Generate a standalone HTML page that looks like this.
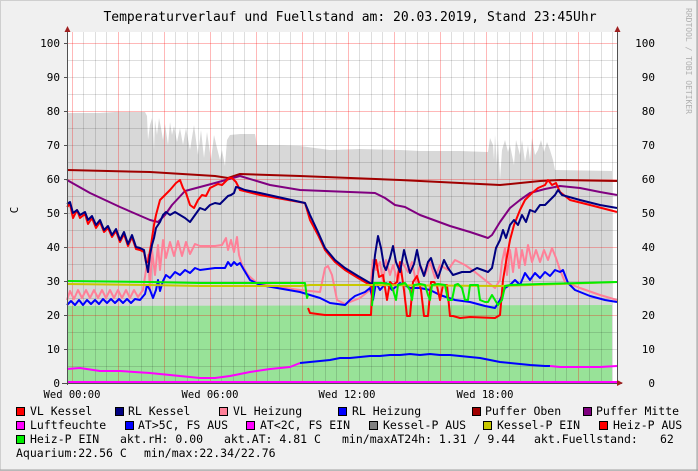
<!DOCTYPE html>
<html><head><meta charset="utf-8"><style>
html,body{margin:0;padding:0;width:698px;height:471px;overflow:hidden;background:#f0f0f0}
svg{display:block}
text{font-family:"DejaVu Sans Mono","Liberation Mono",monospace;font-size:11px;fill:#000}
.lg{font-size:11.5px}
</style></head><body>
<svg width="698" height="471" viewBox="0 0 698 471" xmlns="http://www.w3.org/2000/svg">
<rect x="0" y="0" width="698" height="471" fill="#f0f0f0"/>
<rect x="0.5" y="0.5" width="697" height="470" fill="none" stroke="#cfcfcf"/>
<line x1="0" y1="470" x2="698" y2="470" stroke="#a0a0a0"/>
<line x1="697" y1="0" x2="697" y2="471" stroke="#a0a0a0"/>
<text x="350" y="21" text-anchor="middle" style="font-size:13px">Temperaturverlauf und Fuellstand am: 20.03.2019, Stand 23:45Uhr</text>
<text transform="translate(686,8) rotate(90)" style="font-size:8px;fill:#b0b0b0">RRDTOOL / TOBI OETIKER</text>
<text transform="translate(18,210) rotate(-90)" text-anchor="middle">C</text>
<rect x="67" y="32" width="550" height="351" fill="#ffffff"/>
<polygon fill="#d8d8d8" points="67,383 67,113 100,113 115,112 145,112 147,116 148,140 150,125 152,118 153,128 154,150 155,120 157,135 159,118 161,128 163,140 165,124 168,145 170,122 172,135 174,126 177,142 180,128 183,145 186,128 190,150 194,125 198,155 201,130 204,158 207,132 211,160 214,135 217,148 220,160 222,150 225,166 227,140 230,135 240,134 255,134 257,145 300,146 330,150 360,149 400,150 420,151 460,151 488,152 490,138 493,145 494,160 495,135 497,165 498,140 500,180 502,150 505,140 508,152 510,145 514,165 516,140 520,155 522,140 525,162 528,145 530,160 532,138 535,155 538,150 541,140 544,152 547,142 550,150 553,160 555,170 612,171 612,383"/>
<polygon fill="#98e298" points="67,383 67,306 612,305 612,383"/>
<g stroke="#000" stroke-opacity="0.13" stroke-width="1">
<path d="M67.5,366.5H617M67.5,349.5H617M67.5,332.5H617M67.5,298.5H617M67.5,281.5H617M67.5,264.5H617M67.5,230.5H617M67.5,213.5H617M67.5,196.5H617M67.5,162.5H617M67.5,145.5H617M67.5,128.5H617M67.5,94.5H617M67.5,77.5H617M67.5,60.5H617"/>
<path d="M83.5,32V383M95.5,32V383M106.5,32V383M129.5,32V383M141.5,32V383M152.5,32V383M175.5,32V383M187.5,32V383M198.5,32V383M221.5,32V383M233.5,32V383M244.5,32V383M267.5,32V383M279.5,32V383M290.5,32V383M313.5,32V383M325.5,32V383M336.5,32V383M359.5,32V383M371.5,32V383M382.5,32V383M405.5,32V383M417.5,32V383M428.5,32V383M451.5,32V383M463.5,32V383M474.5,32V383M497.5,32V383M509.5,32V383M520.5,32V383M543.5,32V383M555.5,32V383M566.5,32V383M589.5,32V383M601.5,32V383M612.5,32V383"/>
</g>
<g stroke="#ff0000" stroke-opacity="0.28" stroke-width="1">
<path d="M67,315.5H617M67,247.5H617M67,179.5H617M67,111.5H617M67,43.5H617"/>
<path d="M72.5,32V383M118.5,32V383M164.5,32V383M210.5,32V383M256.5,32V383M302.5,32V383M348.5,32V383M394.5,32V383M440.5,32V383M486.5,32V383M532.5,32V383M578.5,32V383"/>
</g>
<g fill="none" stroke-width="2" stroke-linejoin="round">
<polyline stroke="#a00000" points="67,170 150,172 215,176 228,178 240,174 300,176 400,180 500,185 540,181 560,180 617,181"/>
<polyline stroke="#800080" points="67,180 90,193 120,207 150,220 158,222 165,215 172,205 185,191 200,187 215,183 240,176 270,185 300,190 375,193 385,198 395,205 405,207 420,215 450,226 470,232 488,238 492,235 500,222 510,208 520,200 530,193 545,189 560,186 580,188 600,192 617,195"/>
<polyline stroke="#ff8098" points="67,300 70,291 74,299 78,290 82,298 86,290 90,298 94,290 98,298 102,290 106,298 110,290 114,298 118,290 122,298 126,290 130,298 134,290 138,297 143,290 146,270 148,255 150,290 152,250 155,275 158,245 160,270 163,240 166,258 170,242 174,256 178,241 182,256 186,242 190,254 195,244 200,246 215,246 222,245 226,238 228,250 231,240 234,252 237,237 239,255 242,265 248,275 258,284 300,290 320,292 325,268 328,266 332,275 337,300 345,304 360,298 370,290 373,260 376,270 380,262 383,282 386,260 390,275 393,265 398,282 402,262 408,272 412,262 416,282 420,265 425,275 430,262 435,278 440,265 448,270 455,260 465,265 475,272 485,280 495,288 500,280 502,262 505,248 507,275 510,250 513,272 516,248 519,268 522,250 525,265 528,245 532,262 536,250 540,262 544,250 548,260 552,248 556,258 560,270 565,282 580,288 600,295 617,300"/>
<polyline stroke="#0000ff" points="67,305 71,301 75,305 79,300 83,305 87,300 91,304 95,300 99,304 103,299 107,303 111,299 115,303 119,299 123,303 127,299 131,303 135,299 140,300 145,294 147,285 150,290 153,298 156,290 158,280 160,291 163,281 166,275 170,278 175,272 180,275 185,270 190,273 195,268 200,270 215,268 225,268 228,262 231,266 234,262 237,265 240,263 244,270 250,280 260,285 300,292 320,298 330,303 345,305 350,300 355,296 365,292 370,288 373,300 376,283 380,290 386,283 392,290 400,283 410,288 420,288 430,290 440,295 455,300 470,302 485,306 495,308 500,300 505,288 510,285 515,280 520,285 525,273 530,280 535,273 540,278 545,272 550,276 555,270 560,272 563,270 568,283 575,290 590,296 605,300 617,302"/>
<polyline stroke="#ff0000" points="67,207 70,204 73,218 77,210 80,218 85,214 88,224 92,218 96,228 100,222 104,232 108,228 112,237 116,231 120,242 124,234 128,246 132,237 136,249 140,250 144,252 146,262 148,262 151,245 154,225 156,215 160,200 165,195 170,190 176,183 180,180 183,188 186,193 190,205 194,208 198,200 202,195 206,196 210,188 214,186 218,184 222,185 225,182 229,178 232,178 236,182 240,190 260,195 305,203 310,220 318,235 325,250 335,262 345,270 358,278 370,285 372,287"/>
<polyline stroke="#ff0000" points="308,308 310,313 325,315 371,315 373,270 376,260 379,277 383,275 387,300 390,282 393,285 397,282 400,262 404,290 407,316 410,316 413,282 417,276 421,290 424,316 428,316 431,282 434,282 437,286 440,300 443,285 447,285 450,316 453,316 460,318 470,317 495,318 500,315 503,280 506,262 510,240 514,225 520,210 525,200 532,193 538,188 545,185 548,180 552,185 556,183 560,192 570,200 590,205 617,212"/>
<polyline stroke="#000080" points="67,204 70,202 73,213 77,210 80,215 85,212 88,220 92,216 96,225 100,220 104,230 108,226 112,235 116,229 120,240 124,232 128,244 132,235 136,247 140,248 144,250 146,262 148,272 150,255 152,245 154,238 156,228 158,225 160,222 163,215 166,212 170,215 175,212 180,215 185,218 190,222 195,215 200,208 205,210 210,205 215,203 220,204 224,200 228,196 231,195 234,193 236,187 240,188 245,190 260,193 305,203 310,215 318,232 325,248 335,260 345,268 358,276 370,283 372,285 375,255 378,236 381,248 384,266 386,270 390,258 393,246 396,262 400,272 404,250 407,262 410,273 414,264 417,250 420,265 424,276 428,262 431,258 434,268 438,278 444,260 448,268 453,275 462,272 470,272 477,268 488,272 492,268 496,248 500,240 503,230 506,238 510,225 514,220 518,225 522,215 526,222 530,210 535,212 540,205 545,205 550,200 555,195 558,190 562,195 580,200 600,205 617,208"/>
<polyline stroke="#c8c800" points="67,284 150,285 200,286 300,286 310,285 372,285 500,286 560,284 617,282"/>
<polyline stroke="#00ee00" points="67,281 150,282 200,283 250,283 305,283 307,298 308,295"/>
<polyline stroke="#00ee00" points="372,306 374,283 382,283 390,284 393,290 396,300 398,285 405,283 410,290 412,300 414,285 420,284 425,285 428,295 430,300 432,285 438,284 445,285 448,300 452,300 455,285 458,284 462,288 465,300 468,300 470,285 478,285 480,300 485,302 488,302 492,295 498,305 502,300 505,286 510,285 540,284 580,283 617,282"/>
<polyline stroke="#ff00ff" points="67,369 80,368 100,371 120,371 150,373 180,376 200,378 215,378 230,376 250,372 270,369 290,367 300,363"/>
<polyline stroke="#0000ff" points="300,363 310,362 320,361 330,360 340,358 350,358 360,357 370,356 380,356 390,355 400,355 410,354 420,355 430,354 440,355 450,355 460,356 470,357 480,358 490,360 500,362 510,363 520,364 530,365 545,366 550,366"/>
<polyline stroke="#ff00ff" points="550,366 560,367 580,367 600,367 617,366"/>
<line x1="67" y1="382" x2="617" y2="382" stroke="#ff00ff"/>
</g>
<line x1="67.5" y1="30" x2="67.5" y2="385" stroke="#505050"/>
<line x1="617.5" y1="30" x2="617.5" y2="385" stroke="#505050"/>
<line x1="62" y1="383.5" x2="622" y2="383.5" stroke="#505050"/>
<polygon points="64.5,32 70.5,32 67.5,26" fill="#a02020"/>
<polygon points="614.5,32 620.5,32 617.5,26" fill="#a02020"/>
<polygon points="617,380 617,386 623,383" fill="#a02020"/>
<g stroke="#505050"><path d="M64,43.5h3M64,77.5h3M64,111.5h3M64,145.5h3M64,179.5h3M64,213.5h3M64,247.5h3M64,281.5h3M64,315.5h3M64,349.5h3"/></g>
<g text-anchor="end">
<text x="60" y="47">100</text><text x="60" y="81">90</text><text x="60" y="115">80</text><text x="60" y="149">70</text><text x="60" y="183">60</text><text x="60" y="217">50</text><text x="60" y="251">40</text><text x="60" y="285">30</text><text x="60" y="319">20</text><text x="60" y="353">10</text><text x="60" y="387">0</text>
<text x="655" y="47">100</text><text x="655" y="81">90</text><text x="655" y="115">80</text><text x="655" y="149">70</text><text x="655" y="183">60</text><text x="655" y="217">50</text><text x="655" y="251">40</text><text x="655" y="285">30</text><text x="655" y="319">20</text><text x="655" y="353">10</text><text x="655" y="387">0</text>
</g>
<g text-anchor="middle">
<text x="72" y="398" style="font-size:10.5px">Wed 00:00</text><text x="210" y="398" style="font-size:10.5px">Wed 06:00</text><text x="347" y="398" style="font-size:10.5px">Wed 12:00</text><text x="485" y="398" style="font-size:10.5px">Wed 18:00</text>
</g>
<g stroke="#000" stroke-width="1">
<rect x="16.5" y="407.5" width="8" height="8" fill="#ff0000"/>
<rect x="115.5" y="407.5" width="8" height="8" fill="#000080"/>
<rect x="219.5" y="407.5" width="8" height="8" fill="#ff8098"/>
<rect x="338.5" y="407.5" width="8" height="8" fill="#0000ff"/>
<rect x="472.5" y="407.5" width="8" height="8" fill="#a00000"/>
<rect x="583.5" y="407.5" width="8" height="8" fill="#800080"/>
<rect x="16.5" y="421.5" width="8" height="8" fill="#ff00ff"/>
<rect x="125.5" y="421.5" width="8" height="8" fill="#0000ff"/>
<rect x="246.5" y="421.5" width="8" height="8" fill="#ff00ff"/>
<rect x="369.5" y="421.5" width="8" height="8" fill="#808080"/>
<rect x="483.5" y="421.5" width="8" height="8" fill="#c8c800"/>
<rect x="599.5" y="421.5" width="8" height="8" fill="#ff0000"/>
<rect x="16.5" y="435.5" width="8" height="8" fill="#00ee00"/>
</g>
<text class="lg" x="30" y="415">VL Kessel</text>
<text class="lg" x="128" y="415">RL Kessel</text>
<text class="lg" x="233" y="415">VL Heizung</text>
<text class="lg" x="352" y="415">RL Heizung</text>
<text class="lg" x="485" y="415">Puffer Oben</text>
<text class="lg" x="596" y="415">Puffer Mitte</text>
<text class="lg" x="30" y="429">Luftfeuchte</text>
<text class="lg" x="138" y="429">AT&gt;5C, FS AUS</text>
<text class="lg" x="260" y="429">AT&lt;2C, FS EIN</text>
<text class="lg" x="383" y="429">Kessel-P AUS</text>
<text class="lg" x="497" y="429">Kessel-P EIN</text>
<text class="lg" x="613" y="429">Heiz-P AUS</text>
<text class="lg" x="30" y="443">Heiz-P EIN</text>
<text class="lg" x="120" y="443">akt.rH: 0.00</text>
<text class="lg" x="224" y="443">akt.AT: 4.81 C</text>
<text class="lg" x="342" y="443">min/maxAT24h: 1.31 / 9.44</text>
<text class="lg" x="534" y="443">akt.Fuellstand:</text>
<text class="lg" x="660" y="443">62</text>
<text class="lg" x="16" y="457">Aquarium:22.56 C</text>
<text class="lg" x="144" y="457">min/max:22.34/22.76</text>
</svg>
</body></html>
